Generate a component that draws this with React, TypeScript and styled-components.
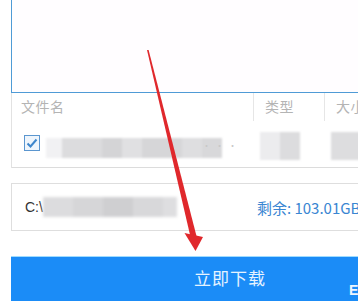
import React from "react";
import styled, { createGlobalStyle } from "styled-components";

const Global = createGlobalStyle`
  html, body { margin: 0; padding: 0; background: #ffffff; }
  body { width: 358px; height: 302px; overflow: hidden; font-family: "Noto Sans CJK SC", "Noto Sans", sans-serif; }
  #root { width: 358px; height: 302px; overflow: hidden; position: relative; }
`;

const Page = styled.div`
  position: relative;
  width: 460px;
  height: 302px;
  padding-left: 11px;
  box-sizing: border-box;
  display: flex;
  flex-direction: column;
`;

const DropArea = styled.div`
  height: 92px;
  width: 438px;
  background: #fffdff;
  border-left: 1px solid #4f9bd6;
  border-bottom: 1px solid #4f9bd6;
  box-sizing: content-box;
`;

const Table = styled.div`
  width: 438px;
  border-left: 1px solid #e2e2e2;
  display: flex;
  flex-direction: column;
`;

const HeaderRow = styled.div`
  display: grid;
  grid-template-columns: 241px 71px 1fr;
  height: 28px;
`;

const HeaderCell = styled.div<{ $sep?: boolean }>`
  display: flex;
  align-items: center;
  padding-left: ${(p) => (p.$sep ? "11px" : "9px")};
  padding-bottom: 3px;
  border-left: ${(p) => (p.$sep ? "1px solid #e6e6e6" : "none")};
  font-size: 14px;
  color: #b4b4b4;
  letter-spacing: 0.5px;
  white-space: nowrap;
  overflow: hidden;
`;

const FileRow = styled.div`
  display: grid;
  grid-template-columns: 241px 71px 1fr;
  height: 46px;
  border-bottom: 1px solid #dcdcdc;
  align-items: center;
`;

const NameCell = styled.div`
  display: flex;
  align-items: center;
  padding-left: 12px;
  gap: 6px;
  position: relative;
`;

const Check = styled.div`
  width: 14px;
  height: 14px;
  border: 1px solid #5b96cf;
  background: #eef5fc;
  display: flex;
  align-items: center;
  justify-content: center;
  flex-shrink: 0;
  margin-top: -2px;
`;

const Blur = styled.div<{ $w: number; $h: number; $c: string }>`
  width: ${(p) => p.$w}px;
  height: ${(p) => p.$h}px;
  background: ${(p) => p.$c};
  flex-shrink: 0;
`;

const BlurGroup = styled.div`
  display: flex;
  filter: blur(1.2px);
  margin-top: 8px;
`;

const Dots = styled.span`
  position: absolute;
  left: 190px;
  top: 9px;
  font-size: 9px;
  color: #c8c8c8;
  letter-spacing: 1px;
`;

const CellBlur = styled.div`
  display: flex;
  filter: blur(1px);
  padding-left: 7px;
  margin-top: 3px;
`;

const PathBox = styled.div`
  margin-top: 15px;
  width: 438px;
  height: 48px;
  border: 1px solid #dedede;
  display: flex;
  align-items: center;
  padding-left: 13px;
  box-sizing: border-box;
`;

const PathText = styled.span`
  font-family: "Liberation Sans", Arial, sans-serif;
  font-size: 14px;
  color: #333;
`;

const PathBlur = styled.div`
  display: flex;
  filter: blur(1.5px);
`;

const Free = styled.span`
  margin-left: 80px;
  font-size: 15px;
  color: #3a86d2;
  font-family: "Noto Sans CJK SC", "Noto Sans", sans-serif;
  white-space: nowrap;
`;

const Button = styled.div`
  margin-top: 25px;
  width: 438px;
  height: 45px;
  background: #1b8cf7;
  border-top: 1px solid #9fdcff;
  display: flex;
  align-items: center;
  justify-content: center;
  color: #e6f3ff;
  font-size: 17px;
  letter-spacing: 1px;
  position: relative;
  padding-bottom: 4px;
  box-sizing: border-box;
`;

const Corner = styled.span`
  position: absolute;
  left: 338px;
  top: 25px;
  font-family: "Liberation Sans", Arial, sans-serif;
  font-weight: bold;
  font-size: 14px;
  color: #eef6ff;
`;

const ArrowLayer = styled.svg`
  position: absolute;
  left: 0;
  top: 0;
  pointer-events: none;
`;

export default function App() {
  return (
    <>
      <Global />
      <Page>
        <DropArea />
        <Table>
          <HeaderRow>
            <HeaderCell>文件名</HeaderCell>
            <HeaderCell $sep>类型</HeaderCell>
            <HeaderCell $sep>大小</HeaderCell>
          </HeaderRow>
          <FileRow>
            <NameCell>
              <Check>
                <svg width="12" height="11" viewBox="0 0 12 11">
                  <path d="M1.5 5.5 L4.5 8.5 L10.5 1.5" fill="none" stroke="#3d86cc" strokeWidth="2" />
                </svg>
              </Check>
              <BlurGroup>
                <Blur $w={16} $h={20} $c="#f1f1f3" />
                <Blur $w={40} $h={20} $c="#dcdcde" />
                <Blur $w={20} $h={20} $c="#d4d4d6" />
                <Blur $w={20} $h={20} $c="#e0e0e2" />
                <Blur $w={40} $h={20} $c="#d6d6d8" />
                <Blur $w={20} $h={20} $c="#dedee0" />
                <Blur $w={20} $h={20} $c="#d8d8da" />
              </BlurGroup>
              <Dots>· · ·</Dots>
            </NameCell>
            <CellBlur>
              <Blur $w={20} $h={28} $c="#ececee" />
              <Blur $w={20} $h={28} $c="#dcdcde" />
            </CellBlur>
            <CellBlur>
              <Blur $w={30} $h={28} $c="#dddddf" />
            </CellBlur>
          </FileRow>
        </Table>
        <PathBox>
          <PathText>C:\</PathText>
          <PathBlur>
            <Blur $w={30} $h={20} $c="#dcdcde" />
            <Blur $w={30} $h={20} $c="#d6d6d8" />
            <Blur $w={30} $h={20} $c="#cfcfd1" />
            <Blur $w={30} $h={20} $c="#d8d8da" />
            <Blur $w={14} $h={20} $c="#dedee0" />
          </PathBlur>
          <Free>剩余: 103.01GB</Free>
        </PathBox>
        <Button>
          立即下载
          <Corner>E</Corner>
        </Button>
        <ArrowLayer width="358" height="302" viewBox="0 0 358 302">
          <polygon points="147,50 148.6,50 196.5,236 190.5,237" fill="#e0282c" />
          <polygon points="184.5,233 203,237 195.5,251" fill="#e0282c" />
        </ArrowLayer>
      </Page>
    </>
  );
}
